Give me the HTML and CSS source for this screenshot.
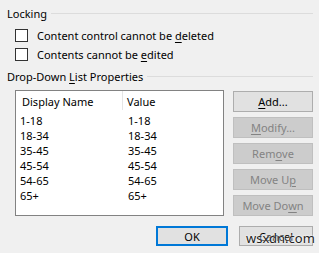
FILE: index.html
```html
<!DOCTYPE html>
<html>
<head>
<meta charset="utf-8">
<link rel="stylesheet" href="styles.css">
</head>
<body>
<div class="dialog">
  <div class="group-title"><span>Locking</span><span class="rule"></span></div>
  <div class="checks">
    <label class="check"><span class="box"></span><span>Content control cannot be <u>d</u>eleted</span></label>
    <label class="check"><span class="box"></span><span>Contents cannot be <u>e</u>dited</span></label>
  </div>
  <div class="group-title second"><span>Drop-Down <u>L</u>ist Properties</span><span class="rule"></span></div>
  <div class="list-area">
    <div class="listbox">
      <div class="lrow head"><span class="c1">Display Name</span><span class="c2">Value</span></div>
      <div class="lrow"><span class="c1">1-18</span><span class="c2">1-18</span></div>
      <div class="lrow"><span class="c1">18-34</span><span class="c2">18-34</span></div>
      <div class="lrow"><span class="c1">35-45</span><span class="c2">35-45</span></div>
      <div class="lrow"><span class="c1">45-54</span><span class="c2">45-54</span></div>
      <div class="lrow"><span class="c1">54-65</span><span class="c2">54-65</span></div>
      <div class="lrow"><span class="c1">65+</span><span class="c2">65+</span></div>
    </div>
    <div class="side-buttons">
      <div class="btn"><u>A</u>dd...</div>
      <div class="btn disabled"><u>M</u>odify...</div>
      <div class="btn disabled">Rem<u>o</u>ve</div>
      <div class="btn disabled">Move U<u>p</u></div>
      <div class="btn disabled">Move Do<u>w</u>n</div>
    </div>
  </div>
  <div class="footer">
    <div class="btn ok">OK</div>
    <div class="btn cancel">Cancel</div>
  </div>
  <div class="watermark">wsxdn.com</div>
</div>
</body>
</html>
```
FILE: styles.css
```css
html, body {
  margin: 0;
  padding: 0;
  background: #f0f0f0;
}
.dialog {
  position: relative;
  width: 319px;
  height: 253px;
  font-family: "Noto Sans", sans-serif;
  font-size: 11px;
  line-height: 15px;
  color: #000;
  padding: 6px 6px 0 7px;
  box-sizing: border-box;
}
u { text-decoration-thickness: 1px; text-underline-offset: 2px; }
.group-title {
  display: flex;
  align-items: center;
  height: 15px;
}
.group-title .rule {
  flex: 1;
  height: 1px;
  background: #dcdcdc;
  margin-left: 4px;
}
.group-title.second { margin-top: 7px; }
.checks {
  display: flex;
  flex-direction: column;
  gap: 4px;
  padding: 7px 0 0 8px;
}
.check {
  display: flex;
  align-items: center;
  height: 15px;
  gap: 9px;
}
.box {
  width: 11px;
  height: 11px;
  border: 1px solid #333;
  background: #fff;
}
.list-area {
  display: flex;
  align-items: flex-start;
  margin-top: 6px;
  padding-left: 8px;
}
.listbox {
  width: 207px;
  height: 124px;
  border: 1px solid #828282;
  background: #fff;
}
.lrow {
  display: flex;
  height: 15px;
}
.lrow .c1 { width: 104px; padding-left: 4px; }
.lrow .c2 { padding-left: 4px; }
.lrow.head { height: 22px; }
.lrow.head .c1 { padding: 3px 0 0 6px; width: 100px; height: 16px; border-right: 1px solid #e5e5e5; }
.lrow.head .c2 { padding: 3px 0 0 4px; }
.side-buttons {
  display: flex;
  flex-direction: column;
  gap: 5px;
  margin-left: 9px;
  margin-top: 1px;
}
.btn {
  box-sizing: border-box;
  width: 80px;
  height: 21px;
  border: 1px solid #adadad;
  background: #e1e1e1;
  display: flex;
  align-items: center;
  justify-content: center;
}
.btn.disabled {
  background: #cccccc;
  border-color: #bfbfbf;
  color: #838383;
}
.footer {
  display: flex;
  justify-content: flex-end;
  gap: 11px;
  margin-top: 10px;
}
.btn.ok {
  width: 72px;
  height: 20px;
  border: 2px solid #0078d7;
}
.btn.cancel {
  width: 74px;
  height: 20px;
}
.watermark {
  position: absolute;
  left: 246px;
  top: 231px;
  font-size: 13px;
  color: #222;
  text-shadow: 0 0 2px #fff, 0 0 2px #fff;
}
```
